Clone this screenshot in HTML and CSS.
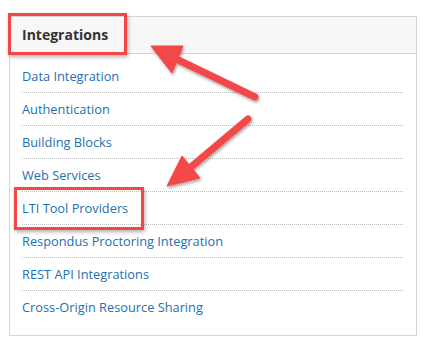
FILE: index.html
```html
<!DOCTYPE html>
<html lang="en">

<head>
    <meta charset="UTF-8">
    <title>Integrations</title>
    <link rel="stylesheet" href="styles.css">
</head>

<body>
    <div class="panel">
        <div class="panel-header">Integrations</div>
        <ul class="link-list">
            <li><a href="#">Data Integration</a></li>
            <li><a href="#">Authentication</a></li>
            <li><a href="#">Building Blocks</a></li>
            <li><a href="#">Web Services</a></li>
            <li><a href="#">LTI Tool Providers</a></li>
            <li><a href="#">Respondus Proctoring Integration</a></li>
            <li><a href="#">REST API Integrations</a></li>
            <li><a href="#">Cross-Origin Resource Sharing</a></li>
        </ul>
    </div>

    <!-- callout annotations -->
    <div class="callout callout-header"></div>
    <div class="callout callout-lti"></div>

    <svg class="arrows" width="433" height="343" viewBox="0 0 433 343">
        <defs>
            <filter id="shadow" x="-20%" y="-20%" width="140%" height="140%">
                <feDropShadow dx="1" dy="2" stdDeviation="1.5" flood-color="#000" flood-opacity="0.35"/>
            </filter>
        </defs>
        <g fill="#f44646" stroke="#f44646" filter="url(#shadow)">
            <line x1="255" y1="97" x2="170" y2="56" stroke-width="7" stroke-linecap="round"/>
            <polygon points="151,46 183,46 172,73" stroke-width="1" stroke-linejoin="round"/>
            <line x1="248" y1="119" x2="185" y2="172" stroke-width="7" stroke-linecap="round"/>
            <polygon points="167,186 182,156 200,178" stroke-width="1" stroke-linejoin="round"/>
        </g>
    </svg>
</body>

</html>
```

FILE: styles.css
```css
* {
    margin: 0;
    padding: 0;
    box-sizing: border-box;
}

body {
    background: #ffffff;
    font-family: 'Open Sans', sans-serif;
    color: #333;
}

.panel {
    margin: 16px 0 0 9px;
    width: 408px;
    border: 1px solid #d6d6d6;
    background: #ffffff;
}

.panel-header {
    height: 37px;
    padding-left: 12px;
    line-height: 36px;
    background-color: #f7f7f7;
    border-bottom: 1px solid #d6d6d6;
    font-size: 14px;
    font-weight: 700;
    color: #333;
}

.link-list {
    list-style: none;
    padding: 6px 13px 12px 12px;
}

.link-list li {
    height: 33px;
    line-height: 32px;
    border-bottom: 1px dotted #bdbdbd;
    font-size: 12.8px;
}

.link-list li:last-child {
    height: 32px;
    border-bottom: none;
}

.link-list a {
    color: #2271b1;
    text-decoration: none;
}

.callout {
    position: absolute;
    border: 3px solid #f44646;
    box-shadow: 1px 2px 4px rgba(0, 0, 0, 0.3);
}

.callout-header {
    left: 8px;
    top: 13px;
    width: 119px;
    height: 42px;
}

.callout-lti {
    left: 14px;
    top: 187px;
    width: 130px;
    height: 43px;
}

.arrows {
    position: absolute;
    left: 0;
    top: 0;
    pointer-events: none;
}
```
